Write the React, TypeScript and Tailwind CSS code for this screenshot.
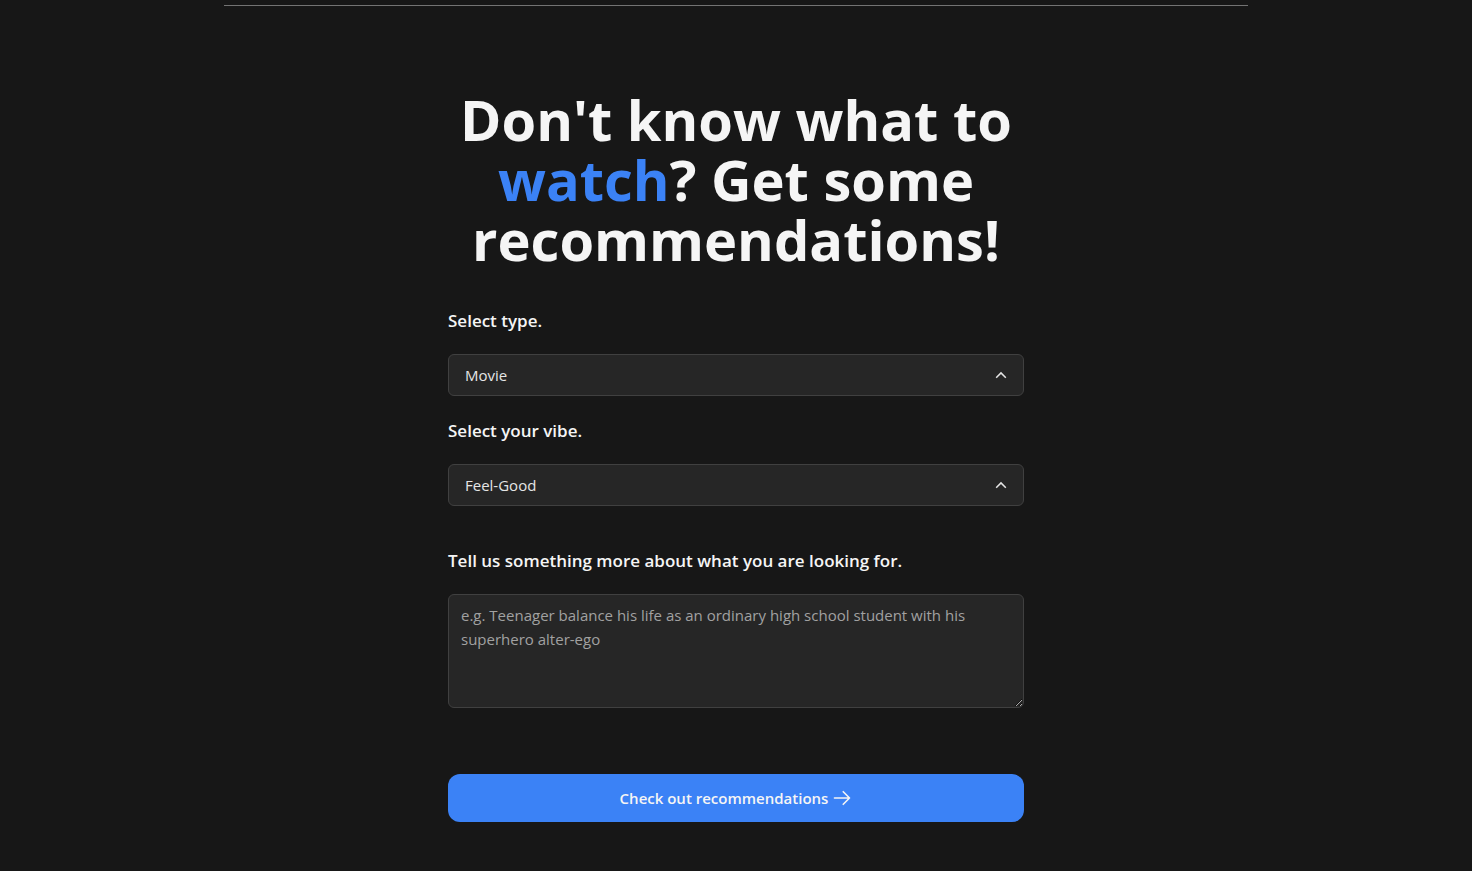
import React from "react";

type PickerProps = {
  id: string;
  label: string;
  options: string[];
};

function Picker({ id, label, options }: PickerProps) {
  return (
    <div className="flex flex-col gap-[18px]">
      <label htmlFor={id} className="text-[17px] leading-[30px] font-semibold text-neutral-100">
        {label}
      </label>
      <div className="relative">
        <select
          id={id}
          className="h-[42px] w-full appearance-none rounded-md border border-neutral-700 bg-neutral-800 px-4 text-[15px] text-neutral-200"
        >
          {options.map((option) => (
            <option key={option}>{option}</option>
          ))}
        </select>
        <svg
          viewBox="0 0 16 16"
          className="pointer-events-none absolute top-[13px] right-[15px] size-4 text-neutral-200"
          fill="none"
          stroke="currentColor"
          strokeWidth="1.5"
          aria-hidden="true"
        >
          <path d="M3.2 10.7 8 5.9 12.8 10.7" />
        </svg>
      </div>
    </div>
  );
}

export default function App() {
  return (
    <main className="min-h-screen bg-neutral-900 pt-[5px] font-['Open_Sans','Noto_Sans',sans-serif]">
      <hr className="mx-auto max-w-5xl border-neutral-500" />
      <section className="mx-auto max-w-xl pt-[83px] pb-12">
        <h1 className="text-center text-[56px] leading-[60px] font-bold text-neutral-100">
          Don't know what to <span className="text-[#3b82f6]">watch</span>? Get some recommendations!
        </h1>
        <form className="mt-[37px] flex flex-col" onSubmit={(event) => event.preventDefault()}>
          <div className="flex flex-col gap-5">
            <Picker id="type" label="Select type." options={["Movie", "TV Show"]} />
            <Picker id="vibe" label="Select your vibe." options={["Feel-Good", "Exciting", "Romantic"]} />
          </div>
          <div className="mt-10 flex flex-col gap-[18px]">
            <label htmlFor="details" className="text-[17px] leading-[30px] font-semibold text-neutral-100">
              Tell us something more about what you are looking for.
            </label>
            <textarea
              id="details"
              placeholder="e.g. Teenager balance his life as an ordinary high school student with his superhero alter-ego"
              className="h-[114px] w-full rounded-md border border-neutral-700 bg-neutral-800 px-3 py-2 text-[15px] leading-6 text-neutral-200 placeholder:text-neutral-400"
            />
          </div>
          <button
            type="submit"
            className="mt-[66px] flex h-12 items-center justify-center gap-1 rounded-xl bg-[#3b82f6] text-[15px] font-semibold text-neutral-100"
          >
            Check out recommendations
            <svg
              viewBox="0 0 24 24"
              className="size-5"
              fill="none"
              stroke="currentColor"
              strokeWidth="2"
              strokeLinecap="round"
              strokeLinejoin="round"
              aria-hidden="true"
            >
              <path d="M13.5 4.5 21 12m0 0-7.5 7.5M21 12H3" />
            </svg>
          </button>
        </form>
      </section>
    </main>
  );
}
